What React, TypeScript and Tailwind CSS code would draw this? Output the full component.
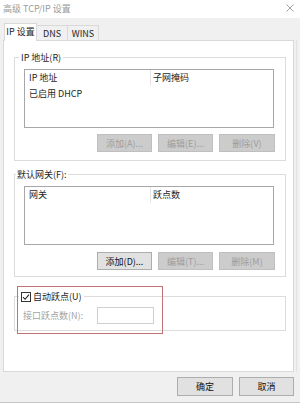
import React from 'react'

const font = { fontFamily: '"Noto Sans CJK SC", "Noto Sans", sans-serif' }

function Btn({ label, disabled, className = '' }: { label: string; disabled?: boolean; className?: string }) {
  return (
    <div
      className={
        'h-[18px] flex items-center justify-center border text-[9px] leading-none ' +
        (disabled
          ? 'bg-[#cccccc] border-[#bfbfbf] text-[#9d9d9d] '
          : 'bg-[#e1e1e1] border-[#adadad] text-[#111] ') +
        className
      }
    >
      {label}
    </div>
  )
}

function ListBox({ col1, col2, row }: { col1: string; col2: string; row?: string }) {
  return (
    <div className="ml-[9px] mt-[6px] w-[250px] h-[59px] border border-[#a7a7a7] bg-white">
      <div className="flex h-[16px] items-center">
        <div className="w-[126px] pl-[4px] border-r border-[#e5e5e5] h-full flex items-center">{col1}</div>
        <div className="pl-[2px]">{col2}</div>
      </div>
      {row && <div className="h-[15px] flex items-center pl-[4px]">{row}</div>}
    </div>
  )
}

export default function App() {
  return (
    <div style={font} className="w-[300px] h-[403px] bg-[#f0f0f0] flex flex-col text-[9px] text-[#1e1e1e] border-b border-[#c4c4c4]">
      {/* Title bar */}
      <div className="h-[18px] bg-white flex items-center justify-between pl-[3px] pr-[6px]">
        <span className="text-[#9a9a9a] text-[9px]">高级 TCP/IP 设置</span>
        <svg width="8" height="8" viewBox="0 0 8 8" className="mt-[-2px]">
          <path d="M0.5 0.5 L7.5 7.5 M7.5 0.5 L0.5 7.5" stroke="#a0a0a0" strokeWidth="1" />
        </svg>
      </div>

      {/* Tabs */}
      <div className="flex items-end h-[23px] pl-[4px]">
        <div className="relative z-10 w-[33px] h-[18px] bg-white border border-b-0 border-[#d9d9d9] flex items-center justify-center pb-[1px]">
          IP 设置
        </div>
        <div className="w-[31px] h-[16px] border-t border-r border-[#d9d9d9] flex items-center justify-center">DNS</div>
        <div className="w-[31px] h-[16px] border-t border-r border-[#d9d9d9] flex items-center justify-center">WINS</div>
      </div>

      <div className="flex">
        {/* Panel */}
        <div className="ml-[3px] -mt-px w-[291px] h-[332px] bg-white border border-[#d9d9d9] flex flex-col">
          {/* IP 地址 */}
          <fieldset className="ml-[10px] mt-[11px] w-[272px] border border-[#dcdcdc] pb-[8px]">
            <legend className="ml-[4px] px-[2px] leading-[11px]">IP 地址(R)</legend>
            <ListBox col1="IP 地址" col2="子网掩码" row="已启用 DHCP" />
            <div className="mt-[6px] flex justify-end gap-[6px] pr-[10px]">
              <Btn label="添加(A)..." disabled className="w-[55px]" />
              <Btn label="编辑(E)..." disabled className="w-[55px]" />
              <Btn label="删除(V)" disabled className="w-[56px]" />
            </div>
          </fieldset>

          {/* 默认网关 */}
          <fieldset className="ml-[10px] mt-[8px] w-[272px] border border-[#dcdcdc] pb-[6px]">
            <legend className="ml-[1px] px-[1px] leading-[11px]">默认网关(F):</legend>
            <ListBox col1="网关" col2="跃点数" />
            <div className="mt-[7px] flex justify-end gap-[6px] pr-[10px]">
              <Btn label="添加(D)..." className="w-[55px]" />
              <Btn label="编辑(T)..." disabled className="w-[55px]" />
              <Btn label="删除(M)" disabled className="w-[56px]" />
            </div>
          </fieldset>

          {/* 自动跃点 */}
          <div className="relative ml-[10px] mt-[14px] w-[272px]">
            <fieldset className="border border-[#dcdcdc] pb-[6px]">
              <legend className="ml-[4px] px-[2px] leading-[11px] flex items-center gap-[2px]">
                <span className="w-[10px] h-[10px] border border-[#333] bg-white flex items-center justify-center">
                  <svg width="8" height="8" viewBox="0 0 8 8">
                    <path d="M1 4.2 L3.1 6.3 L7 1.6" stroke="#222" strokeWidth="1.1" fill="none" />
                  </svg>
                </span>
                <span>自动跃点(U)</span>
              </legend>
              <div className="mt-[5px] flex items-center pl-[8px]">
                <span className="w-[74px] text-[#a3a3a3]">接口跃点数(N):</span>
                <div className="w-[57px] h-[17px] border border-[#cfcfcf] bg-white" />
              </div>
            </fieldset>
            <div className="absolute left-[3px] top-[-5px] w-[146px] h-[48px] border border-[#c27474] pointer-events-none" />
          </div>
        </div>
        <div className="ml-[2px] -mt-px w-px h-[332px] bg-[#e2e2e2]" />
      </div>

      {/* Bottom buttons */}
      <div className="flex justify-end gap-[6px] pt-[5px] pr-[6px]">
        <Btn label="确定" className="w-[56px] h-[19px]" />
        <Btn label="取消" className="w-[55px] h-[19px]" />
      </div>
    </div>
  )
}
